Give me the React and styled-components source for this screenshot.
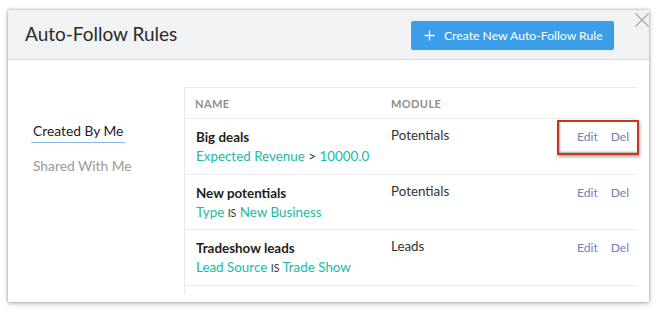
import React from "react";
import styled, { createGlobalStyle } from "styled-components";

const Global = createGlobalStyle`
  html, body { margin: 0; padding: 0; background: #ffffff; }
  body { font-family: Lato, "Open Sans", sans-serif; -webkit-font-smoothing: antialiased; }
  * { box-sizing: border-box; }
`;

const Page = styled.div`
  width: 657px;
  height: 313px;
  padding: 10px 8px 0 8px;
  overflow: hidden;
`;

const Dialog = styled.div`
  position: relative;
  width: 641px;
  height: 292px;
  background: #fff;
  box-shadow: 0 0 3px rgba(0, 0, 0, 0.35), 0 2px 6px rgba(0, 0, 0, 0.18);
  display: flex;
  flex-direction: column;
`;

const Header = styled.div`
  height: 50px;
  flex: none;
  background: #f1f2f4;
  border-bottom: 1px solid #dadbdd;
  display: flex;
  align-items: center;
  justify-content: space-between;
  padding: 0 35px 0 17px;
`;

const Title = styled.h1`
  margin: 0 0 2px 0;
  font-size: 19px;
  font-weight: 400;
  color: #2b2b2b;
`;

const PrimaryButton = styled.button`
  height: 29px;
  width: 203px;
  margin-top: 1px;
  border: none;
  border-radius: 2px;
  background: #3c9ee9;
  color: #fff;
  font-family: inherit;
  font-size: 12.2px;
  white-space: nowrap;
  display: flex;
  align-items: center;
  padding: 0 0 0 13px;
  gap: 9px;
  svg { flex: none; }
`;

const Close = styled.svg`
  position: absolute;
  right: -1px;
  top: 2px;
`;

const Body = styled.div`
  flex: 1;
  min-height: 0;
  display: flex;
  padding: 27px 12px 8px 23px;
`;

const Nav = styled.nav`
  width: 153px;
  flex: none;
  display: flex;
  flex-direction: column;
  align-items: flex-start;
  padding-top: 35px;
  gap: 14px;
`;

const NavItem = styled.div`
  font-size: 13.8px;
  color: ${(p) => (p.$active ? "#222" : "#9a9a9a")};
  padding: 0 2px 3px 2px;
  border-bottom: 1px solid ${(p) => (p.$active ? "#8bbbe9" : "transparent")};
`;

const Table = styled.div`
  flex: 1;
  min-width: 0;
  border-left: 1px solid #e8e8e8;
  border-top: 1px solid #e8e8e8;
  display: flex;
  flex-direction: column;
`;

const Row = styled.div`
  display: grid;
  grid-template-columns: 196px 1fr 82px;
  border-bottom: 1px solid #ececec;
  flex: none;
  height: ${(p) => p.$h}px;
`;

const HeadCell = styled.div`
  font-size: 11px;
  font-weight: 700;
  letter-spacing: 0.4px;
  color: #8e8e8e;
  padding: 0 0 0 10px;
  display: flex;
  align-items: center;
`;

const NameCell = styled.div`
  padding: 10px 0 0 11px;
  display: flex;
  flex-direction: column;
  gap: 2px;
`;

const Name = styled.div`
  font-size: 13.4px;
  font-weight: 700;
  color: #1e1e1e;
  line-height: 17px;
`;

const Criteria = styled.div`
  font-size: 13.4px;
  color: #22b9a6;
  line-height: 17px;
  white-space: nowrap;
`;

const Op = styled.span`
  color: #333;
  font-size: ${(p) => (p.$small ? "10.5px" : "13.4px")};
`;

const ModuleCell = styled.div`
  padding: 8px 0 0 10px;
  font-size: 13.4px;
  color: #333;
  line-height: 17px;
`;

const Actions = styled.div`
  position: relative;
  display: flex;
  gap: 13px;
  padding: 9px 0 0 22px;
  font-size: 12.1px;
  line-height: 17px;
  color: #6c7fb9;
  white-space: nowrap;
`;

const Highlight = styled.div`
  position: absolute;
  left: 2px;
  top: 1px;
  width: 82px;
  height: 35px;
  border: 2px solid #c43526;
  box-shadow: inset 1px -1px 2px rgba(0, 0, 0, 0.35), 1px 2px 3px rgba(0, 0, 0, 0.35);
`;

const rules = [
  { name: "Big deals", field: "Expected Revenue", op: ">", value: "10000.0", module: "Potentials", h: 56, hl: true },
  { name: "New potentials", field: "Type", op: "IS", value: "New Business", module: "Potentials", h: 55 },
  { name: "Tradeshow leads", field: "Lead Source", op: "IS", value: "Trade Show", module: "Leads", h: 56 },
];

export default function App() {
  return (
    <Page>
      <Global />
      <Dialog>
        <Header>
          <Title>Auto-Follow Rules</Title>
          <PrimaryButton>
            <svg width="11" height="11" viewBox="0 0 11 11">
              <path d="M5.5 0.5v10M0.5 5.5h10" stroke="#fff" strokeWidth="1.3" />
            </svg>
            Create New Auto-Follow Rule
          </PrimaryButton>
        </Header>
        <Close width="16" height="16" viewBox="0 0 16 16">
          <path d="M1.5 1.5l13 13M14.5 1.5l-13 13" stroke="#a9a9a9" strokeWidth="1.3" />
        </Close>
        <Body>
          <Nav>
            <NavItem $active>Created By Me</NavItem>
            <NavItem>Shared With Me</NavItem>
          </Nav>
          <Table>
            <Row $h={31}>
              <HeadCell>NAME</HeadCell>
              <HeadCell>MODULE</HeadCell>
              <HeadCell />
            </Row>
            {rules.map((r) => (
              <Row key={r.name} $h={r.h}>
                <NameCell>
                  <Name>{r.name}</Name>
                  <Criteria>
                    {r.field} <Op $small={r.op === "IS"}>{r.op}</Op> {r.value}
                  </Criteria>
                </NameCell>
                <ModuleCell>{r.module}</ModuleCell>
                <Actions>
                  {r.hl && <Highlight />}
                  <span>Edit</span>
                  <span>Del</span>
                </Actions>
              </Row>
            ))}
          </Table>
        </Body>
      </Dialog>
    </Page>
  );
}
